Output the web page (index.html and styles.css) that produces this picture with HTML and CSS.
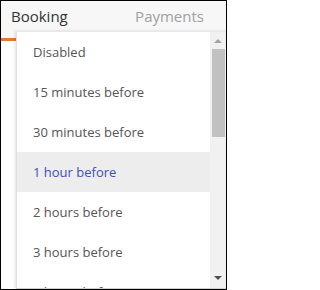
FILE: index.html
```html
<!DOCTYPE html>
<html>
<head>
<meta charset="utf-8">
<link rel="stylesheet" href="styles.css">
</head>
<body>
<div class="frame">
  <div class="tabs">
    <div class="tab tab-active">Booking</div>
    <div class="tab tab-muted">Payments</div>
  </div>
  <div class="content"></div>
  <div class="dropdown">
    <ul class="options">
      <li class="option">Disabled</li>
      <li class="option">15 minutes before</li>
      <li class="option">30 minutes before</li>
      <li class="option option-selected">1 hour before</li>
      <li class="option">2 hours before</li>
      <li class="option">3 hours before</li>
      <li class="option">4 hours before</li>
    </ul>
    <div class="scrollbar">
      <div class="arrow arrow-up"></div>
      <div class="thumb"></div>
      <div class="track-rest"></div>
      <div class="arrow arrow-down"></div>
    </div>
  </div>
</div>
</body>
</html>
```
FILE: styles.css
```css
html, body {
  margin: 0;
  padding: 0;
  background: #fff;
}
.frame {
  position: relative;
  width: 227px;
  height: 290px;
  box-sizing: border-box;
  border: 1px solid #000;
  overflow: hidden;
  background: #fff;
  font-family: "Open Sans", "Noto Sans", sans-serif;
}
.tabs {
  display: flex;
  height: 40px;
  background: #f7f7f7;
}
.tab {
  font-size: 15px;
  line-height: 22px;
  padding-top: 4px;
  box-sizing: border-box;
}
.tab-active {
  color: #333;
  padding-left: 10px;
  width: 80px;
  border-bottom: 3px solid #e8782f;
}
.tab-muted {
  color: #a0a0a0;
  margin-left: auto;
  padding-right: 22px;
}
.content {
  background: #fff;
}
.dropdown {
  position: absolute;
  left: 15px;
  top: 30px;
  right: 0;
  bottom: 0;
  display: flex;
  background: #fff;
  border-top: 1px solid #e6e6e6;
  border-left: 1px solid #e0e0e0;
  border-bottom: 1px solid #cfcfcf;
  box-shadow: -1px 0 3px rgba(0, 0, 0, 0.12);
}
.options {
  list-style: none;
  margin: 0;
  padding: 0;
  flex: 1;
  overflow: hidden;
}
.option {
  height: 40px;
  line-height: 40px;
  padding-left: 16px;
  font-size: 13px;
  color: #555;
  white-space: nowrap;
}
.option-selected {
  background: #ededed;
  color: #3f51b5;
}
.scrollbar {
  width: 16px;
  background: #f1f1f1;
  display: flex;
  flex-direction: column;
  align-items: center;
}
.arrow {
  width: 0;
  height: 0;
  border-left: 4px solid transparent;
  border-right: 4px solid transparent;
}
.arrow-up {
  margin-top: 7px;
  border-bottom: 4px solid #a3a3a3;
}
.arrow-down {
  margin-bottom: 8px;
  border-top: 4px solid #505050;
}
.thumb {
  margin-top: 6px;
  width: 13px;
  height: 88px;
  background: #c1c1c1;
}
.track-rest {
  flex: 1;
}
```
